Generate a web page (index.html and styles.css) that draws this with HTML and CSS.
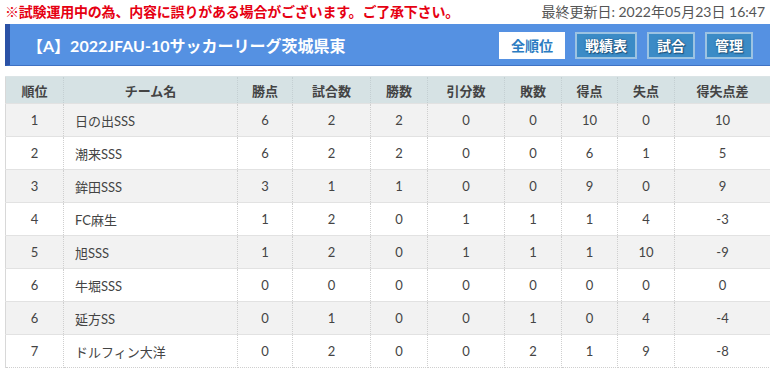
FILE: index.html
```html
<!DOCTYPE html>
<html lang="ja">
<head>
<meta charset="utf-8">
<title>順位表</title>
<link rel="stylesheet" href="styles.css">
</head>
<body>
<div class="page">
  <div class="topline">
    <span class="notice">※試験運用中の為、内容に誤りがある場合がございます。ご了承下さい。</span>
    <span class="updated">最終更新日: 2022年05月23日 16:47</span>
  </div>
  <div class="titlebar">
    <h1 class="title">【A】2022JFAU-10サッカーリーグ茨城県東</h1>
    <nav class="btns">
      <a class="btn btn-active">全順位</a>
      <a class="btn">戦績表</a>
      <a class="btn">試合</a>
      <a class="btn">管理</a>
    </nav>
  </div>
  <table class="standings">
    <colgroup>
      <col class="c-rank"><col class="c-team"><col class="c-pts"><col class="c-gp"><col class="c-w"><col class="c-d"><col class="c-l"><col class="c-gf"><col class="c-ga"><col class="c-gd">
    </colgroup>
    <thead>
      <tr><th>順位</th><th>チーム名</th><th>勝点</th><th>試合数</th><th>勝数</th><th>引分数</th><th>敗数</th><th>得点</th><th>失点</th><th>得失点差</th></tr>
    </thead>
    <tbody>
      <tr><td>1</td><td class="team">日の出SSS</td><td>6</td><td>2</td><td>2</td><td>0</td><td>0</td><td>10</td><td>0</td><td>10</td></tr>
      <tr><td>2</td><td class="team">潮来SSS</td><td>6</td><td>2</td><td>2</td><td>0</td><td>0</td><td>6</td><td>1</td><td>5</td></tr>
      <tr><td>3</td><td class="team">鉾田SSS</td><td>3</td><td>1</td><td>1</td><td>0</td><td>0</td><td>9</td><td>0</td><td>9</td></tr>
      <tr><td>4</td><td class="team">FC麻生</td><td>1</td><td>2</td><td>0</td><td>1</td><td>1</td><td>1</td><td>4</td><td>-3</td></tr>
      <tr><td>5</td><td class="team">旭SSS</td><td>1</td><td>2</td><td>0</td><td>1</td><td>1</td><td>1</td><td>10</td><td>-9</td></tr>
      <tr><td>6</td><td class="team">牛堀SSS</td><td>0</td><td>0</td><td>0</td><td>0</td><td>0</td><td>0</td><td>0</td><td>0</td></tr>
      <tr><td>6</td><td class="team">延方SS</td><td>0</td><td>1</td><td>0</td><td>0</td><td>1</td><td>0</td><td>4</td><td>-4</td></tr>
      <tr><td>7</td><td class="team">ドルフィン大洋</td><td>0</td><td>2</td><td>0</td><td>0</td><td>2</td><td>1</td><td>9</td><td>-8</td></tr>
    </tbody>
  </table>
</div>
</body>
</html>
```

FILE: styles.css
```css
html, body {
  margin: 0;
  padding: 0;
  background: #fff;
}
body {
  font-family: Lato, "Noto Sans CJK JP", sans-serif;
  color: #444;
}
.page {
  padding-left: 5px;
  width: 765px;
}
.topline {
  height: 24px;
  display: flex;
  justify-content: space-between;
  align-items: center;
  font-size: 14px;
  line-height: 20px;
}
.notice {
  color: #e60012;
  font-weight: bold;
  letter-spacing: -0.2px;
}
.updated {
  color: #555;
  margin-right: 5px;
}
.titlebar {
  height: 41px;
  background: #5591e2;
  border-left: 5px solid #2b52a6;
  border-bottom: 1px solid #3f72c4;
  display: flex;
  align-items: center;
  justify-content: space-between;
  padding: 0 17px 0 17px;
}
.title {
  margin: 0;
  font-size: 16px;
  font-weight: bold;
  color: #fff;
}
.btns {
  display: flex;
  gap: 10px;
  margin-top: 1px;
}
.btn {
  display: block;
  height: 23px;
  line-height: 23px;
  padding: 0 8px;
  font-size: 14px;
  font-weight: bold;
  color: #fff;
  background: #3b8bc6;
  border: 2px solid #9cc3e2;
  text-shadow: 0 0 2px #1d4f78, 1px 1px 1px #1d4f78;
  cursor: pointer;
}
.btn-active {
  background: #fff;
  color: #2b7cc2;
  border-color: #fff;
  text-shadow: none;
  padding: 0 10px;
}
.standings {
  margin-top: 10px;
  width: 765px;
  border-collapse: collapse;
  table-layout: fixed;
  font-size: 13px;
  border-left: 1px solid #d8d8d8;
}
.c-rank { width: 58px; }
.c-team { width: 174px; }
.c-pts { width: 55px; }
.c-gp { width: 78px; }
.c-w { width: 57px; }
.c-d { width: 77px; }
.c-l { width: 57px; }
.c-gf { width: 56px; }
.c-ga { width: 57px; }
.c-gd { width: 96px; }
.standings th {
  height: 26px;
  background: #d6e2e4;
  color: #444;
  font-weight: bold;
  border: 1px dotted #c4cfd2;
  border-top: 1px solid #dbe4e6;
  padding: 0;
  text-align: center;
}
.standings td {
  height: 32px;
  padding: 0;
  text-align: center;
  border: 1px dotted #cfcfcf;
  border-top: 1px solid #e2e2e2;
}
.standings tbody tr:nth-child(odd) td {
  background: #f2f2f2;
}
.standings td.team {
  text-align: left;
  padding-left: 11px;
}
```
